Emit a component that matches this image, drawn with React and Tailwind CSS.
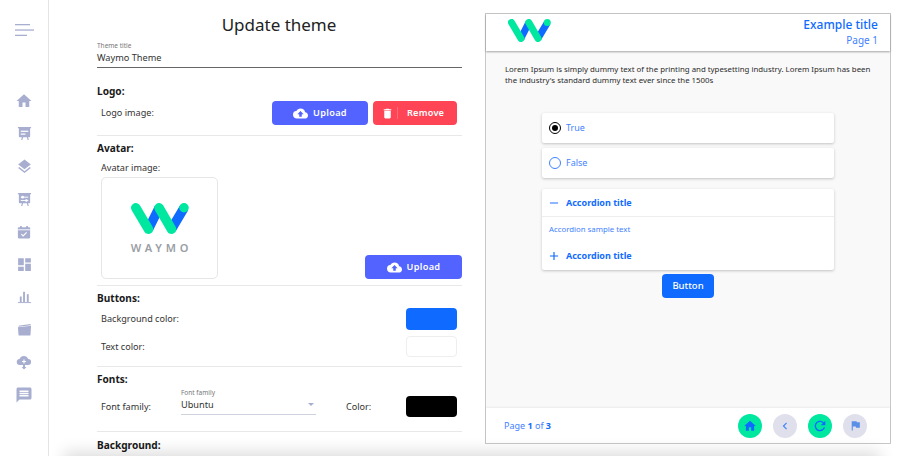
import React from "react";
import { MdHome, MdLayers, MdDashboard, MdMessage, MdDelete, MdFlag, MdRefresh, MdChevronLeft, MdCloudUpload, MdAdd, MdRemove } from "react-icons/md";

const Logo = ({ className }) => (
  <svg viewBox="0 0 58 31" className={className}>
    <path d="M17.500 26 L28 5 M40.500 26 L53 5" stroke="#0f6bff" strokeWidth="9.500" fill="none" />
    <path d="M4.750 4.750 L17.500 26.250 M28 4.750 L40.500 26.250" stroke="#00e89f" strokeWidth="9.500" strokeLinecap="round" fill="none" />
    <circle cx="53" cy="4.750" r="4.750" fill="#00e89f" />
  </svg>
);

const Board = ({ settings }) => (
  <svg viewBox="0 0 16 16" className="w-[15px] h-[15px]" fill="#a8aed0">
    <path d="M1 1h14v1.500h-1V11a1 1 0 0 1-1 1h-1.200l.8 3h-1.300l-.8-3H6.500l-.8 3H4.400l.8-3H3a1 1 0 0 1-1-1V2.500H1z" />
    {settings ? (
      <g fill="#fff">
        <rect x="4" y="5" width="8" height="1" />
        <circle cx="6" cy="5.500" r="1.400" />
        <rect x="4" y="8.500" width="8" height="1" />
        <circle cx="10" cy="9" r="1.400" />
      </g>
    ) : (
      <g fill="#fff">
        <rect x="4" y="5" width="8" height="1.300" />
        <rect x="4" y="8" width="5" height="1.300" />
      </g>
    )}
  </svg>
);

const Calendar = () => (
  <svg viewBox="0 0 16 16" className="w-[14px] h-[14px]">
    <path d="M3.500 1h2v1.500h5V1h2v1.500H14a1 1 0 0 1 1 1V14a1.500 1.500 0 0 1-1.500 1.500h-11A1.500 1.500 0 0 1 1 14V3.500a1 1 0 0 1 1-1h1.500z" fill="#a8aed0" />
    <rect x="1" y="5" width="14" height="1" fill="#fff" />
    <path d="M5 10.500l2 2 4-4" stroke="#fff" strokeWidth="1.300" fill="none" />
  </svg>
);

const Bars = () => (
  <svg viewBox="0 0 16 16" className="w-[15px] h-[15px]" fill="#a8aed0">
    <rect x="3" y="8" width="2" height="6" />
    <rect x="6.500" y="3" width="2" height="11" />
    <rect x="10.500" y="5.500" width="2" height="8.500" />
    <rect x="1" y="14" width="14" height="1" />
  </svg>
);

const Folder = () => (
  <svg viewBox="0 0 16 16" className="w-[15px] h-[15px]" fill="#a8aed0">
    <path d="M1.500 4 14.500 2v1.500L2 5z" />
    <path d="M1 5.500 15 4l-.6 9.500a1 1 0 0 1-1 1H2.600a1 1 0 0 1-1-1z" />
  </svg>
);

const CloudSide = () => (
  <svg viewBox="0 0 16 16" className="w-[16px] h-[16px]">
    <path d="M4 11a3 3 0 0 1-.5-6A4.700 4.700 0 0 1 12.200 5 3 3 0 0 1 12 11H9v2h1.500L8 15.500 5.500 13H7v-2z" fill="#a8aed0" />
    <path d="M8 5.500v4M6 7.500h4" stroke="#fff" strokeWidth="1.100" />
  </svg>
);

const Hamburger = () => (
  <svg viewBox="0 0 19 12" className="w-[19px] h-[12px]" fill="#a8aed0">
    <rect x="0" y="0" width="15" height="1.300" />
    <rect x="0" y="5.400" width="19" height="1.300" />
    <rect x="0" y="10.700" width="12" height="1.300" />
  </svg>
);

const navIcons = [
  <MdHome key="a" className="w-[18px] h-[18px] text-[#a8aed0]" />,
  <Board key="b" />,
  <MdLayers key="c" className="w-[17px] h-[17px] text-[#a8aed0]" />,
  <Board key="d" settings />,
  <Calendar key="e" />,
  <MdDashboard key="f" className="w-[17px] h-[17px] text-[#a8aed0]" />,
  <Bars key="g" />,
  <Folder key="h" />,
  <CloudSide key="i" />,
  <MdMessage key="j" className="w-[18px] h-[18px] text-[#a8aed0]" />,
];

const Heading = ({ className, children }) => (
  <div className={`h-[14px] leading-[14px] text-[10.100px] font-bold text-[#1a1a1a] ${className}`}>{children}</div>
);

const Divider = ({ className }) => <div className={`h-px bg-[#e8e8e8] ${className}`} />;

const Label = ({ children, className = "" }) => (
  <span className={`text-[9.100px] text-[#333] ${className}`}>{children}</span>
);

const UploadButton = ({ className }) => (
  <button className={`h-[24px] bg-[#5263ff] rounded-[4px] flex items-center justify-center gap-[5px] text-white text-[9.200px] font-semibold tracking-[0.3px] ${className}`}>
    <MdCloudUpload className="w-[15px] h-[15px]" />
    Upload
  </button>
);

const Card = ({ className, children }) => (
  <div className={`bg-white rounded-[2px] shadow-[0_1px_3px_rgba(0,0,0,0.22)] ${className}`}>{children}</div>
);

const Circle = ({ className, children }) => (
  <div className={`w-[24px] h-[24px] rounded-full flex items-center justify-center ${className}`}>{children}</div>
);

export default function App() {
  return (
    <div className="relative flex w-[904px] h-[456px] overflow-hidden bg-white font-['Noto_Sans',sans-serif]">
      <aside className="w-[49px] shrink-0 border-r border-[#e4e4e4] flex flex-col items-center">
        <div className="mt-[24px]"><Hamburger /></div>
        <div className="mt-[49px] flex flex-col items-center">
          {navIcons.map((icon) => (
            <div key={icon.key} className="h-[32.600px] flex items-center justify-center">{icon}</div>
          ))}
        </div>
      </aside>

      <main className="ml-[48px] w-[365px] shrink-0">
        <h1 className="pt-[10px] h-[40px] leading-[30px] text-center text-[17px] text-[#222] mr-[1px]">Update theme</h1>
        <div className="mt-[2px] border-b border-[#666] h-[26px]">
          <div className="h-[8px] leading-[8px] text-[6.500px] text-[#777]">Theme title</div>
          <div className="mt-[2px] h-[12px] leading-[12px] text-[9.200px] text-[#333]">Waymo Theme</div>
        </div>

        <Heading className="mt-[16px]">Logo:</Heading>
        <div className="mt-[3px] h-[24px] pl-[4px] pr-[5px] flex items-center">
          <Label>Logo image:</Label>
          <UploadButton className="ml-auto w-[96px]" />
          <button className="ml-[5px] w-[84px] h-[24px] bg-[#ff4455] rounded-[4px] flex items-center text-white text-[9.200px] font-semibold tracking-[0.2px]">
            <MdDelete className="ml-[8px] w-[13px] h-[13px]" />
            <span className="ml-[3px] h-[12px] w-px bg-[#ff6b78]" />
            <span className="ml-[9px]">Remove</span>
          </button>
        </div>
        <Divider className="mt-[10px]" />

        <Heading className="mt-[5px]">Avatar:</Heading>
        <div className="mt-[4px] h-[12px] leading-[12px] pl-[4px]"><Label>Avatar image:</Label></div>
        <div className="mt-[6px] pl-[4px] flex items-end justify-between">
          <div className="w-[117px] h-[102px] border border-[#e6e6e6] rounded-[5px] flex flex-col items-center pt-[25px]">
            <Logo className="w-[58px] h-[31px]" />
            <span className="mt-[7px] leading-[14px] pl-[4px] text-[11px] font-semibold tracking-[3.800px] text-[#9a9ea5] whitespace-nowrap">WAYMO</span>
          </div>
          <UploadButton className="w-[97px]" />
        </div>
        <Divider className="mt-[6px]" />

        <Heading className="mt-[5px]">Buttons:</Heading>
        <div className="mt-[3px] h-[22px] pl-[4px] pr-[5px] flex items-center justify-between">
          <Label>Background color:</Label>
          <div className="w-[51px] h-[22px] rounded-[4px] bg-[#0f6bff]" />
        </div>
        <div className="mt-[6px] h-[21px] pl-[4px] pr-[5px] flex items-center justify-between">
          <Label>Text color:</Label>
          <div className="w-[51px] h-[21px] rounded-[4px] bg-white border border-[#eeeeee]" />
        </div>
        <Divider className="mt-[9px]" />

        <Heading className="mt-[5px]">Fonts:</Heading>
        <div className="mt-[3px] h-[30px] pl-[4px] pr-[5px] flex items-center">
          <Label className="w-[80px] mt-[6px]">Font family:</Label>
          <div className="w-[135px] h-[26px] border-b border-[#cfd2de] -mt-[4px]">
            <div className="h-[8px] leading-[8px] text-[6.500px] text-[#777]">Font family</div>
            <div className="mt-[1px] h-[13px] leading-[13px] flex items-center justify-between text-[9.200px] text-[#333]">
              Ubuntu
              <span className="mr-[2px] w-0 h-0 border-x-[3px] border-x-transparent border-t-[3px] border-t-[#a8aed0]" />
            </div>
          </div>
          <Label className="ml-[30px] mt-[6px]">Color:</Label>
          <div className="ml-auto mt-[4px] w-[51px] h-[21px] rounded-[4px] bg-black" />
        </div>
        <Divider className="mt-[12px]" />
        <Heading className="mt-[6px]">Background:</Heading>
      </main>

      <section className="ml-[23px] mt-[13px] w-[406px] h-[431px] border-[1.500px] border-[#c8c8c8] flex flex-col bg-[#f9f9f9] shrink-0">
        <header className="h-[37px] bg-white shadow-[0_1px_2px_rgba(0,0,0,0.35)] flex justify-between pl-[22px] pr-[12px] shrink-0">
          <Logo className="w-[43px] h-[23px] mt-[5px]" />
          <div className="flex flex-col items-end text-[#0f6bff]">
            <span className="mt-[3px] h-[16px] leading-[16px] text-[12px] font-medium">Example title</span>
            <span className="h-[14px] leading-[14px] text-[10px] text-[#3f82ff]">Page 1</span>
          </div>
        </header>

        <div className="flex-1 flex flex-col">
          <p className="mt-[13px] ml-[19px] w-[375px] text-[7.850px] leading-[11px] text-[#2b2b2b]">
            Lorem Ipsum is simply dummy text of the printing and typesetting industry. Lorem Ipsum has been the industry's standard dummy text ever since the 1500s
          </p>
          <div className="ml-[56px] w-[292px] mt-[27px]">
            <Card className="h-[30px] flex items-center pl-[7px] gap-[5px] text-[9px] text-[#3f82ff]">
              <span className="w-[12px] h-[12px] rounded-full border-[1.500px] border-black flex items-center justify-center">
                <span className="w-[6px] h-[6px] rounded-full bg-black" />
              </span>
              True
            </Card>
            <Card className="mt-[5px] h-[30px] flex items-center pl-[7px] gap-[5px] text-[9px] text-[#3f82ff]">
              <span className="w-[12px] h-[12px] rounded-full border-[1.500px] border-[#3f82ff]" />
              False
            </Card>
            <Card className="mt-[11px] h-[81px]">
              <div className="h-[28px] border-b border-[#eeeeee] flex items-center pl-[5px] text-[9px] font-bold text-[#0f6bff]">
                <MdRemove className="w-[14px] h-[14px] text-[#3f82ff]" />
                <span className="ml-[5px]">Accordion title</span>
              </div>
              <div className="h-[25px] flex items-center pl-[7px] text-[7.800px] text-[#3f82ff]">Accordion sample text</div>
              <div className="h-[27px] flex items-center pl-[5px] text-[9px] font-bold text-[#0f6bff]">
                <MdAdd className="w-[14px] h-[14px]" />
                <span className="ml-[5px]">Accordion title</span>
              </div>
            </Card>
          </div>
          <button className="mt-[4px] w-[52px] h-[24px] bg-[#0f6bff] rounded-[4px] text-white text-[9.500px] font-medium ml-[176px]">Button</button>
        </div>

        <footer className="h-[35px] bg-white shadow-[0_-1px_2px_rgba(0,0,0,0.06)] flex items-center pl-[18px] pr-[23px] shrink-0">
          <span className="text-[9px] text-[#3f82ff]">Page <b className="text-[#0f6bff]">1</b> of <b className="text-[#0f6bff]">3</b></span>
          <div className="ml-auto flex gap-[11px]">
            <Circle className="bg-[#00e89f]"><MdHome className="w-[14px] h-[14px] text-[#0f6bff]" /></Circle>
            <Circle className="bg-[#dfe0ec]"><MdChevronLeft className="w-[14px] h-[14px] text-[#3f82ff]" /></Circle>
            <Circle className="bg-[#00e89f]"><MdRefresh className="w-[16px] h-[16px] text-[#0f6bff]" /></Circle>
            <Circle className="bg-[#dfe0ec]"><MdFlag className="w-[13px] h-[13px] text-[#5a8fe8]" /></Circle>
          </div>
        </footer>
      </section>

      <div className="absolute left-[70px] right-[30px] top-[458px] h-[10px] shadow-[0_0_16px_6px_rgba(0,0,0,0.14)]" />
    </div>
  );
}
